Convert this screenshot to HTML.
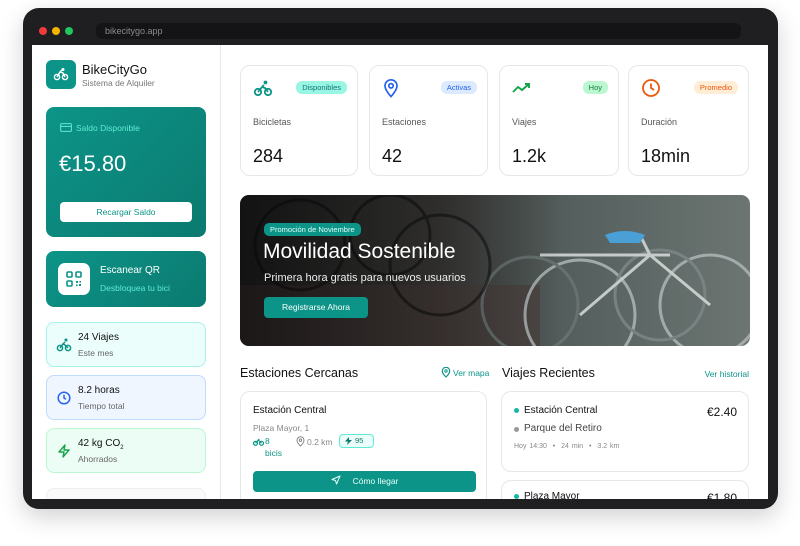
<!DOCTYPE html>
<html><head><meta charset="utf-8"><style>
*{box-sizing:border-box;margin:0;padding:0}
body{width:800px;height:546px;background:#fff;font-family:"Liberation Sans",sans-serif;position:relative;overflow:hidden;color:#111}
.a{position:absolute}
.frame{left:23px;top:8px;width:755px;height:501px;background:#1f1f22;border-radius:16px;box-shadow:0 8px 24px rgba(0,0,0,.18)}
.screen{left:32px;top:45px;width:736px;height:454px;background:#fff;overflow:hidden}
.dot{width:8px;height:8px;border-radius:50%;top:27px}
.card{border:1px solid #e5e7eb;border-radius:10px;background:#fff}
.pill{font-size:7.5px;padding:2px 6px;border-radius:6px}
.lbl{font-size:9px;color:#555}
.val{font-size:18px;color:#111}
.sc{border-radius:8px;border:1px solid}
</style></head><body>
<div class="a frame"></div>
<div class="a dot" style="left:39px;background:#ef3b3b"></div>
<div class="a dot" style="left:52px;background:#f5b400"></div>
<div class="a dot" style="left:65px;background:#22c55e"></div>
<div class="a" style="left:96px;top:23px;width:645px;height:16px;background:#141416;border-radius:6px;color:#8a8a8f;font-size:9px;line-height:16px;padding-left:9px">bikecitygo.app</div>

<div class="a screen">
 <div class="a" style="left:188px;top:0;width:1px;height:454px;background:#e8e8ea"></div>
 <div class="a" style="left:14px;top:15px;width:30px;height:29px;background:#0d9488;border-radius:6px">
  <svg width="30" height="29" viewBox="0 0 30 29"><g fill="none" stroke="#fff" stroke-width="1.4"><circle cx="11" cy="17" r="2.6"/><circle cx="19" cy="17" r="2.6"/><path d="M11 17l3-5 3 1 2 4M14 12l2-2"/><circle cx="17" cy="9.5" r=".8"/></g></svg>
 </div>
 <div class="a" style="left:50px;top:17px;font-size:13px">BikeCityGo</div>
 <div class="a" style="left:50px;top:33px;font-size:8.5px;color:#777">Sistema de Alquiler</div>

 <div class="a" style="left:14px;top:62px;width:160px;height:130px;border-radius:8px;background:linear-gradient(135deg,#0d9488,#0b7a70)">
  <svg class="a" style="left:14px;top:16px" width="12" height="9" viewBox="0 0 12 9"><rect x=".6" y=".6" width="10.8" height="7.8" rx="1.2" fill="none" stroke="#5eead4" stroke-width="1"/><path d="M.6 3.4h10.8" stroke="#5eead4"/></svg>
  <div class="a" style="left:30px;top:16px;font-size:8.5px;color:#5eead4">Saldo Disponible</div>
  <div class="a" style="left:13px;top:44px;font-size:22px;color:#fff">€15.80</div>
  <div class="a" style="left:14px;top:95px;width:132px;height:20px;background:#fff;border-radius:4px;color:#0d9488;font-size:8.5px;text-align:center;line-height:20px">Recargar Saldo</div>
 </div>

 <div class="a" style="left:14px;top:206px;width:160px;height:56px;border-radius:8px;background:linear-gradient(135deg,#0d9488,#0b7a70)">
  <div class="a" style="left:12px;top:12px;width:32px;height:32px;background:#fff;border-radius:7px">
   <svg width="32" height="32" viewBox="0 0 32 32"><g fill="none" stroke="#0d9488" stroke-width="1.6"><rect x="9" y="9" width="5" height="5" rx="1"/><rect x="18" y="9" width="5" height="5" rx="1"/><rect x="9" y="18" width="5" height="5" rx="1"/></g><g fill="#0d9488"><rect x="18" y="18" width="2" height="2"/><rect x="21" y="21" width="2" height="2"/><rect x="18" y="21.5" width="1.6" height="1.6"/><rect x="21.4" y="18" width="1.6" height="1.6"/></g></svg>
  </div>
  <div class="a" style="left:54px;top:14px;font-size:10px;color:#fff">Escanear QR</div>
  <div class="a" style="left:54px;top:32px;font-size:8.5px;color:#5eead4">Desbloquea tu bici</div>
 </div>

 <div class="a sc" style="left:14px;top:277px;width:160px;height:45px;background:#ecfefb;border-color:#a7f3e8">
  <svg class="a" style="left:9px;top:15px" width="16" height="14" viewBox="0 0 16 14"><g fill="none" stroke="#0d9488" stroke-width="1.5"><circle cx="4" cy="10" r="2.6"/><circle cx="12" cy="10" r="2.6"/><path d="M4 10l3-4 2 1 3 3M7 6l2-2"/><circle cx="10" cy="2" r=".8"/></g></svg>
  <div class="a" style="left:31px;top:9px;font-size:10px">24 Viajes</div>
  <div class="a" style="left:31px;top:25px;font-size:8.5px;color:#666">Este mes</div>
 </div>
 <div class="a sc" style="left:14px;top:330px;width:160px;height:45px;background:#eff6ff;border-color:#bfdbfe">
  <svg class="a" style="left:10px;top:15px" width="14" height="14" viewBox="0 0 14 14"><circle cx="7" cy="7" r="5.8" fill="none" stroke="#2563eb" stroke-width="1.5"/><path d="M7 3.8V7l2 1.3" fill="none" stroke="#2563eb" stroke-width="1.5"/></svg>
  <div class="a" style="left:31px;top:9px;font-size:10px">8.2 horas</div>
  <div class="a" style="left:31px;top:25px;font-size:8.5px;color:#666">Tiempo total</div>
 </div>
 <div class="a sc" style="left:14px;top:383px;width:160px;height:45px;background:#ecfdf5;border-color:#bbf7d0">
  <svg class="a" style="left:10px;top:15px" width="14" height="14" viewBox="0 0 14 14"><path d="M8 1L2 8h5l-1 5 6-7H7z" fill="none" stroke="#16a34a" stroke-width="1.4" stroke-linejoin="round"/></svg>
  <div class="a" style="left:31px;top:9px;font-size:10px">42 kg CO<sub style="font-size:6px">2</sub></div>
  <div class="a" style="left:31px;top:25px;font-size:8.5px;color:#666">Ahorrados</div>
 </div>
 <div class="a sc" style="left:14px;top:443px;width:160px;height:30px;background:#fafafa;border-color:#eee"></div>

 <div class="a card" style="left:208px;top:20px;width:118px;height:111px">
  <svg class="a" style="left:12px;top:14px" width="20" height="17" viewBox="0 0 20 17"><g fill="none" stroke="#0d9488" stroke-width="1.8"><circle cx="5" cy="12" r="3.2"/><circle cx="15" cy="12" r="3.2"/><path d="M5 12l4-5 3 1 3 4M9 7l2-2"/><circle cx="12.5" cy="2.5" r="1"/></g></svg>
  <div class="a pill" style="right:10px;top:15px;background:#99f6e4;color:#0f766e">Disponibles</div>
  <div class="a lbl" style="left:12px;top:51px">Bicicletas</div>
  <div class="a val" style="left:12px;top:80px">284</div>
 </div>
 <div class="a card" style="left:337px;top:20px;width:119px;height:111px">
  <svg class="a" style="left:13px;top:12px" width="16" height="20" viewBox="0 0 16 20"><path d="M8 18.5S2 12.5 2 7.8a6 6 0 0112 0C14 12.5 8 18.5 8 18.5z" fill="none" stroke="#2563eb" stroke-width="1.7"/><circle cx="8" cy="7.8" r="2.2" fill="none" stroke="#2563eb" stroke-width="1.7"/></svg>
  <div class="a pill" style="right:10px;top:15px;background:#dbeafe;color:#2563eb">Activas</div>
  <div class="a lbl" style="left:12px;top:51px">Estaciones</div>
  <div class="a val" style="left:12px;top:80px">42</div>
 </div>
 <div class="a card" style="left:467px;top:20px;width:120px;height:111px">
  <svg class="a" style="left:12px;top:15px" width="20" height="14" viewBox="0 0 20 14"><path d="M1 11l5-5 4 3 7-6M13 3h4v4" fill="none" stroke="#16a34a" stroke-width="1.9"/></svg>
  <div class="a pill" style="right:10px;top:15px;background:#bbf7d0;color:#15803d">Hoy</div>
  <div class="a lbl" style="left:12px;top:51px">Viajes</div>
  <div class="a val" style="left:12px;top:80px">1.2k</div>
 </div>
 <div class="a card" style="left:596px;top:20px;width:121px;height:111px">
  <svg class="a" style="left:12px;top:12px" width="20" height="20" viewBox="0 0 20 20"><circle cx="10" cy="10" r="8" fill="none" stroke="#ea580c" stroke-width="1.8"/><path d="M10 5.5V10l3 2" fill="none" stroke="#ea580c" stroke-width="1.8"/></svg>
  <div class="a pill" style="right:10px;top:15px;background:#ffedd5;color:#ea580c">Promedio</div>
  <div class="a lbl" style="left:12px;top:51px">Duración</div>
  <div class="a val" style="left:12px;top:80px">18min</div>
 </div>

 <div class="a" style="left:208px;top:150px;width:510px;height:151px;border-radius:9px;overflow:hidden;background:linear-gradient(90deg,#2a2a2a 0%,#3b3a38 40%,#55605e 65%,#6c7572 100%)">
  <div class="a" style="left:0;top:90px;width:300px;height:61px;background:#4a3c3a;opacity:.6"></div>
  <svg class="a" style="left:0;top:0" width="510" height="151" viewBox="0 0 510 151">
   <g fill="none" stroke="#aeb7b6" stroke-width="3" opacity=".85">
    <circle cx="340" cy="120" r="55"/><circle cx="470" cy="110" r="50"/><circle cx="290" cy="110" r="48" stroke="#6a7574"/><circle cx="420" cy="100" r="45" stroke="#7d8887"/>
    <path d="M340 120l70-60 60 50M400 40l10 20M300 60h130" stroke="#d8dddc"/>
   </g>
   <g fill="none" stroke="#111" stroke-width="3" opacity=".6"><circle cx="60" cy="50" r="45"/><circle cx="200" cy="70" r="50"/><circle cx="150" cy="40" r="40"/></g>
   <path d="M365 40q20-8 40 0l-5 8h-30z" fill="#4a9fd6"/>
  </svg>
  <div class="a" style="left:0;top:0;width:320px;height:151px;background:linear-gradient(90deg,rgba(0,0,0,.55),rgba(0,0,0,0))"></div>
  <div class="a" style="left:24px;top:28px;background:#0d9488;color:#dffdf7;font-size:7.5px;padding:2px 6px;border-radius:5px">Promoción de Noviembre</div>
  <div class="a" style="left:23px;top:45px;font-size:21px;color:#fff">Movilidad Sostenible</div>
  <div class="a" style="left:24px;top:77px;font-size:11px;color:#eee">Primera hora gratis para nuevos usuarios</div>
  <div class="a" style="left:24px;top:102px;width:104px;height:21px;background:#0d9488;border-radius:4px;color:#fff;font-size:8.5px;text-align:center;line-height:21px">Registrarse Ahora</div>
 </div>

 <div class="a" style="left:208px;top:321px;font-size:12.5px">Estaciones Cercanas</div>
 <svg class="a" style="left:409px;top:322px" width="10" height="11" viewBox="0 0 10 11"><path d="M5 10S1.3 6.5 1.3 4a3.7 3.7 0 017.4 0C8.7 6.5 5 10 5 10z" fill="none" stroke="#0d9488" stroke-width="1.2"/><circle cx="5" cy="4" r="1.2" fill="none" stroke="#0d9488"/></svg>
 <div class="a" style="left:421px;top:323px;font-size:8.5px;color:#0d9488">Ver mapa</div>
 <div class="a" style="left:470px;top:321px;font-size:12.5px">Viajes Recientes</div>
 <div class="a" style="right:19px;top:324px;font-size:8.5px;color:#0d9488">Ver historial</div>

 <div class="a card" style="left:208px;top:346px;width:247px;height:130px">
  <div class="a" style="left:12px;top:13px;font-size:10px">Estación Central</div>
  <div class="a" style="left:12px;top:31px;font-size:8.5px;color:#888">Plaza Mayor, 1</div>
  <svg class="a" style="left:12px;top:45px" width="11" height="9" viewBox="0 0 11 9"><g fill="none" stroke="#0d9488" stroke-width="1.2"><circle cx="2.5" cy="6.3" r="2"/><circle cx="8.5" cy="6.3" r="2"/><path d="M2.5 6.3l2.5-3 2 1 1.5 2M5 3.3l1.3-1.3"/></g></svg>
  <div class="a" style="left:24px;top:43px;font-size:8.5px;color:#0d9488;line-height:12px">8<br>bicis</div>
  <svg class="a" style="left:55px;top:44px" width="9" height="11" viewBox="0 0 9 11"><path d="M4.5 10S1 6.7 1 4.2a3.5 3.5 0 017 0C8 6.7 4.5 10 4.5 10z" fill="none" stroke="#888"/><circle cx="4.5" cy="4.2" r="1.2" fill="none" stroke="#888"/></svg>
  <div class="a" style="left:66px;top:45px;font-size:8.5px;color:#888">0.2 km</div>
  <div class="a" style="left:98px;top:42px;width:35px;height:14px;border:1px solid #5eead4;background:#ecfefb;border-radius:4px;font-size:7.5px;color:#0f766e;line-height:12px;padding-left:15px">95</div>
  <svg class="a" style="left:104px;top:45px" width="7" height="8" viewBox="0 0 7 8"><path d="M4 0L0 4.5h3l-1 3.5 5-5H4z" fill="#0f766e"/></svg>
  <div class="a" style="left:12px;top:79px;width:223px;height:21px;background:#0d9488;border-radius:4px;color:#e6fffa;font-size:8.5px;text-align:center;line-height:21px">
   <svg width="10" height="10" viewBox="0 0 10 10" style="vertical-align:-1px;margin-right:12px"><path d="M9 1L1 4.5l3.5 1L5.5 9z" fill="none" stroke="#e6fffa" stroke-linejoin="round"/></svg>Cómo llegar</div>
 </div>

 <div class="a card" style="left:469px;top:346px;width:248px;height:81px">
  <div class="a" style="left:12px;top:16px;width:5px;height:5px;border-radius:50%;background:#14b8a6"></div>
  <div class="a" style="left:22px;top:13px;font-size:10px">Estación Central</div>
  <div class="a" style="right:11px;top:13px;font-size:12px">€2.40</div>
  <div class="a" style="left:12px;top:35px;width:5px;height:5px;border-radius:50%;background:#999"></div>
  <div class="a" style="left:22px;top:31px;font-size:10px;color:#444">Parque del Retiro</div>
  <div class="a" style="left:12px;top:51px;font-size:7px;color:#888;word-spacing:1px">Hoy 14:30 &nbsp;• &nbsp;24 min &nbsp;• &nbsp;3.2 km</div>
 </div>
 <div class="a card" style="left:469px;top:435px;width:248px;height:60px">
  <div class="a" style="left:12px;top:13px;width:5px;height:5px;border-radius:50%;background:#14b8a6"></div>
  <div class="a" style="left:22px;top:10px;font-size:10px">Plaza Mayor</div>
  <div class="a" style="right:11px;top:10px;font-size:12px">€1.80</div>
 </div>
</div>
</body></html>
